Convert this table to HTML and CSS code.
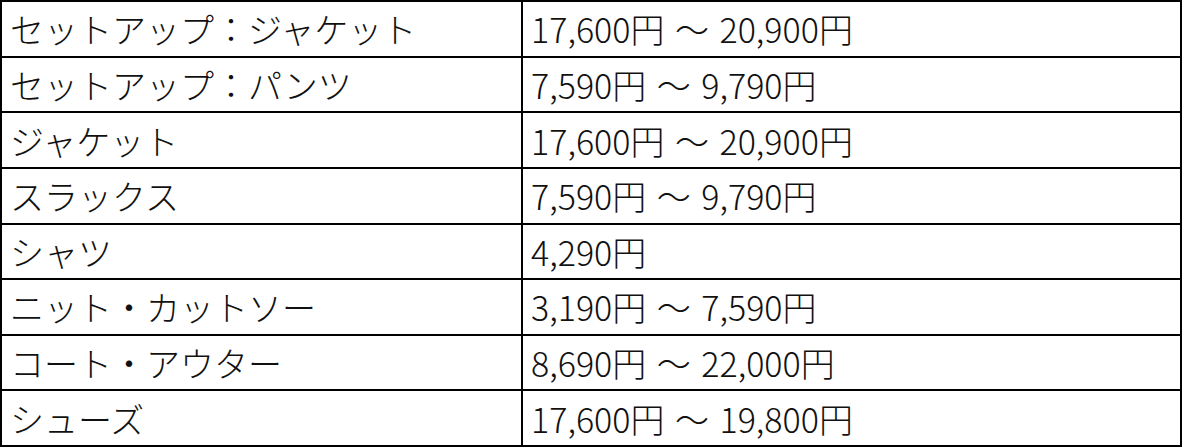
FILE: index.html
```html
<!DOCTYPE html>
<html lang="ja">
<head>
<meta charset="utf-8">
<link rel="stylesheet" href="styles.css">
</head>
<body>
<table class="price-table">
  <colgroup><col class="col-item"><col class="col-price"></colgroup>
  <tbody>
    <tr><td>セットアップ：ジャケット</td><td>17,600円 ～ 20,900円</td></tr>
    <tr><td>セットアップ：パンツ</td><td>7,590円 ～ 9,790円</td></tr>
    <tr><td>ジャケット</td><td>17,600円 ～ 20,900円</td></tr>
    <tr><td>スラックス</td><td>7,590円 ～ 9,790円</td></tr>
    <tr><td>シャツ</td><td>4,290円</td></tr>
    <tr><td>ニット・カットソー</td><td>3,190円 ～ 7,590円</td></tr>
    <tr><td>コート・アウター</td><td>8,690円 ～ 22,000円</td></tr>
    <tr><td>シューズ</td><td>17,600円 ～ 19,800円</td></tr>
  </tbody>
</table>
</body>
</html>
```
FILE: styles.css
```css
html, body {
  margin: 0;
  padding: 0;
  background: #fff;
}
.price-table {
  border-collapse: separate;
  border-spacing: 0;
  width: 1182px;
  height: 447px;
  table-layout: fixed;
  border-top: 2px solid #000;
  border-left: 2px solid #000;
  box-sizing: border-box;
  font-family: "Noto Sans CJK JP", "Noto Sans", sans-serif;
  font-weight: 300;
  font-size: 34px;
  color: #111;
}
.col-item { width: 521px; }
.col-price { width: auto; }
.price-table td {
  border-right: 2px solid #000;
  border-bottom: 2.5px solid #000;
  padding: 1px 0 0 8px;
  vertical-align: middle;
  white-space: nowrap;
  line-height: 1;
  word-spacing: 3px;
}
```
